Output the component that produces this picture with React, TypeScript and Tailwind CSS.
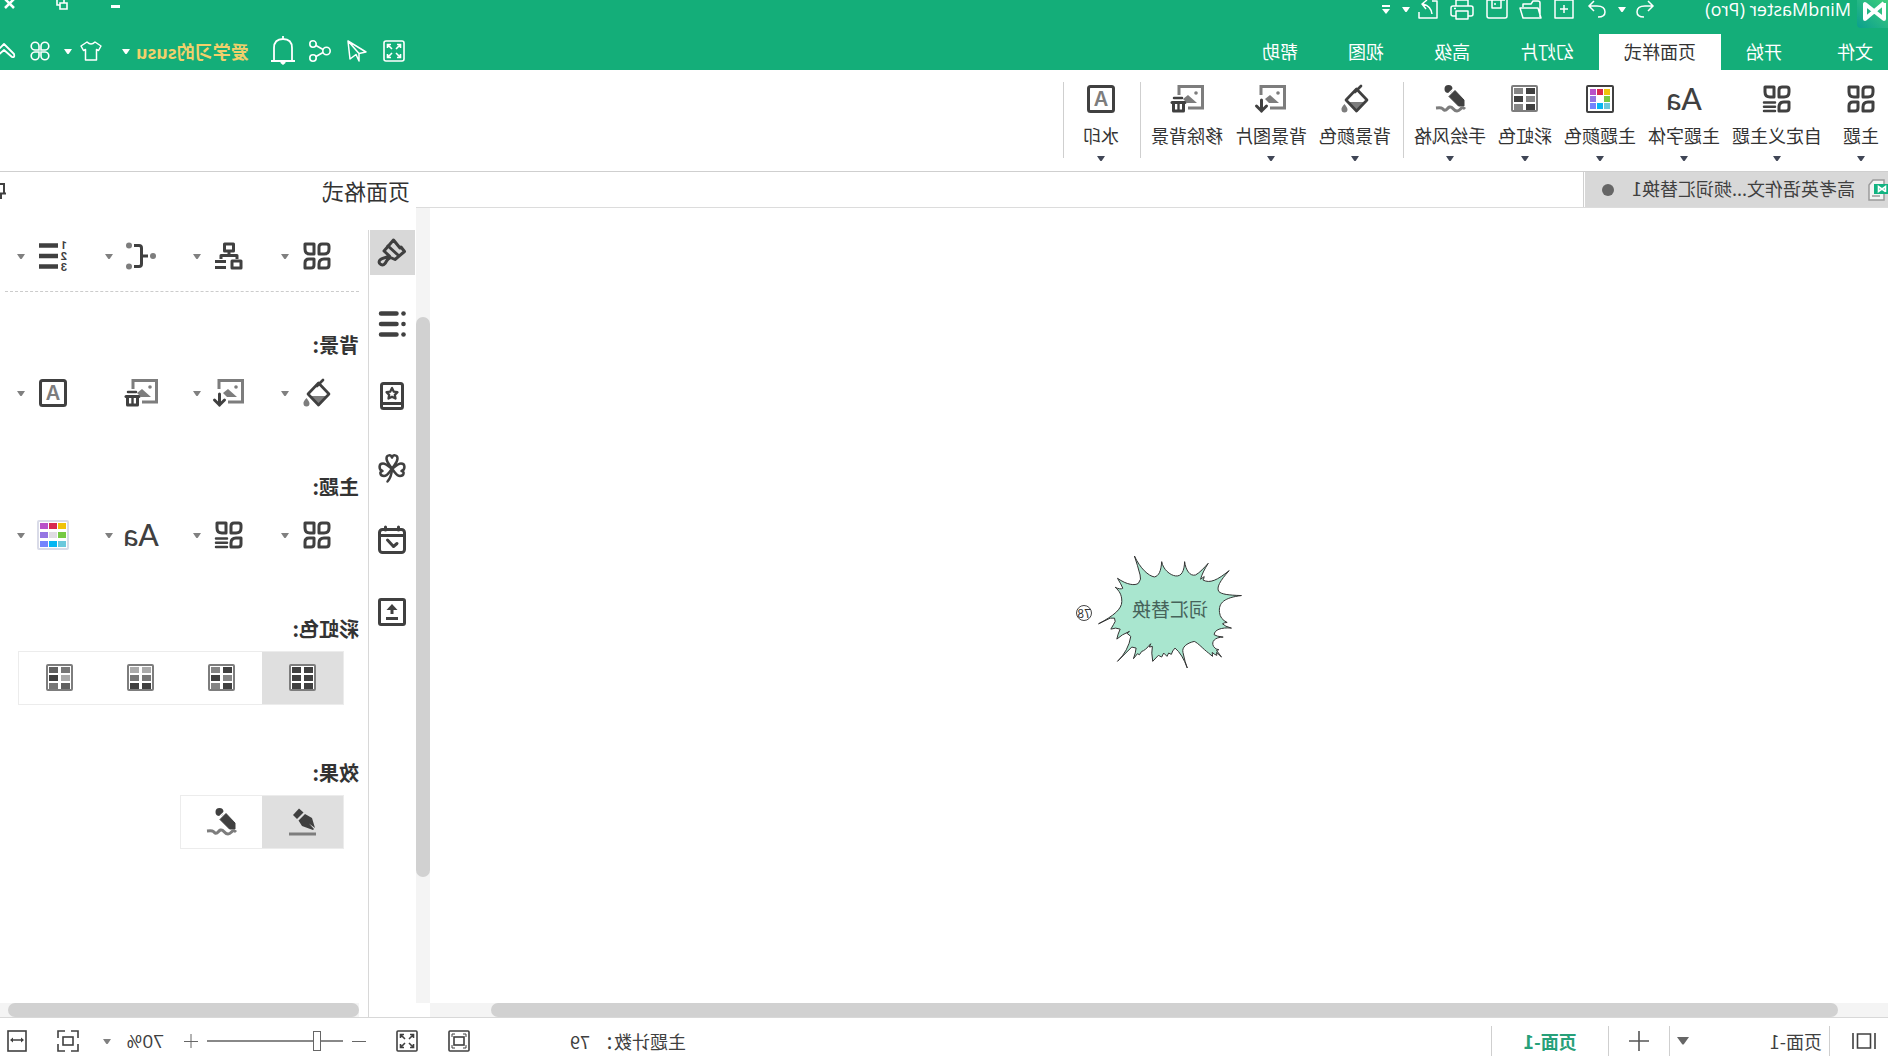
import { ReactNode } from "react";

const DARK = "#404040";
const GREY = "#7d7d7d";

interface IconProps {
  w?: number;
  h?: number;
  children: ReactNode;
}

function Icon({ w = 28, h = 28, children }: IconProps) {
  return (
    <svg width={w} height={h} viewBox={`0 0 ${w} ${h}`} fill="none" className="shrink-0 overflow-visible" aria-hidden="true">
      {children}
    </svg>
  );
}

function Caret({ className = "text-[#808080]" }: { className?: string }) {
  return (
    <svg width="8" height="5" viewBox="0 0 8 5" className={`shrink-0 ${className}`} aria-hidden="true">
      <path d="M0 0h8L5 4.4a1.3 1.3 0 0 1-2 0z" fill="currentColor" />
    </svg>
  );
}

/* ---------- ribbon and panel icons ---------- */

const PETAL_TL = "M2 4.500Q2 2 4.500 2H9Q12 2 12 5V12H7Q2 12 2 7z";
const PETAL_TR = "M17 2H26V7Q26 12 21 12H17z";
const PETAL_BL = "M2 17H7Q12 17 12 22V26H5Q2 26 2 23z";
const PETAL_BR = "M17 17H22Q26 17 26 21V26H20Q17 26 17 23z";

function ThemeIcon() {
  return (
    <Icon>
      <g stroke={DARK} strokeWidth="3" strokeLinejoin="round">
        <path d={PETAL_TL} />
        <path d={PETAL_TR} />
        <path d={PETAL_BL} />
        <path d={PETAL_BR} />
      </g>
    </Icon>
  );
}

function CustomThemeIcon() {
  return (
    <Icon>
      <g stroke={DARK} strokeWidth="3" strokeLinejoin="round">
        <path d={PETAL_TL} />
        <path d={PETAL_TR} />
        <path d={PETAL_BL} />
        <path d="M16 17.500H27M16 21.800H27M16 26H27" strokeWidth="2.500" strokeLinecap="round" />
      </g>
    </Icon>
  );
}

function FontIcon() {
  return <span className="pb-0.5 font-[Lato,sans-serif] text-[30px] font-medium leading-7 text-[#404040]">Aa</span>;
}

const SWATCHES = ["#f0c30b", "#d9294f", "#b950c8", "#76c943", "#ffffff", "#9575e3", "#6cc8dc", "#06b6f2", "#7484fd"];

function PaletteIcon({ soft = false }: { soft?: boolean }) {
  const size = soft ? 8 : 6;
  const step = soft ? 9 : 7;
  return (
    <Icon w={soft ? 32 : 28} h={soft ? 30 : 28}>
      <rect x="1" y="1" width={soft ? 30 : 26} height={soft ? 28 : 26} rx="1" stroke={soft ? "#d9dbe8" : DARK} strokeWidth="2" fill="#fff" />
      {SWATCHES.map((c, i) => (
        <rect
          key={i}
          x={(soft ? 3 : 4) + (i % 3) * step}
          y={(soft ? 3 : 4) + Math.floor(i / 3) * step}
          width={size}
          height={soft ? 6 : size}
          fill={soft && i === 4 ? "#e0dce2" : c}
        />
      ))}
    </Icon>
  );
}

function GridIcon({ cells }: { cells: string[] }) {
  return (
    <Icon w={27}>
      <rect x="1" y="1" width="25" height="25" rx="1" stroke={GREY} strokeWidth="2" fill="#fff" />
      {cells.map((c, i) => (
        <rect key={i} x={3 + (i % 2) * 12} y={3 + Math.floor(i / 2) * 8} width="9" height="6" fill={c} />
      ))}
    </Icon>
  );
}

const CHECKER = [DARK, "#858585", "#858585", DARK, DARK, "#858585"];

function HandDrawnIcon() {
  return (
    <Icon w={30}>
      <circle cx="16.500" cy="4" r="4" fill={DARK} />
      <path d="M10 5.500L16 11.500L6.500 21H1V15z" fill={DARK} stroke={DARK} strokeLinejoin="round" />
      <path d="M10.500 3L18.500 10.500" stroke="#fff" strokeWidth="1.500" />
      <path d="M0 24C4 20 4 26 8 26C12 26 12 21 15.500 22C18 23 18 26 21 25C23 23 23 22.500 29 23" stroke={GREY} strokeWidth="3" />
    </Icon>
  );
}

function PenIcon() {
  return (
    <Icon w={27}>
      <path d="M12.500 4.500L17 0.500L23 7L19 11z" fill={DARK} />
      <path d="M11 6L17.500 12.500L14 18L3 22L2 21L7 15.500L1 20L4 10z" fill={DARK} />
      <path d="M0 26H27" stroke={GREY} strokeWidth="3" />
    </Icon>
  );
}

function BucketIcon() {
  return (
    <Icon>
      <path d="M4 17H21L12.500 26z" fill={GREY} />
      <path d="M12.500 4L23 15L12.500 26L2 15z" stroke={DARK} strokeWidth="2.700" strokeLinejoin="round" />
      <path d="M8 1L14 7" stroke={DARK} strokeWidth="2.700" strokeLinecap="round" />
      <path d="M24.500 19Q28 22.500 27.500 24.500A3 3 0 0 1 21.500 24.500Q21.500 22.500 24.500 19z" fill={GREY} />
    </Icon>
  );
}

function PictureFrame() {
  return (
    <>
      <path d="M25 10V1.500H1.500V23H16" stroke={GREY} strokeWidth="3" />
      <circle cx="8" cy="8" r="1.800" fill={GREY} />
      <path d="M7 18L16 10L21 14L17 18z" fill={GREY} />
    </>
  );
}

function BackgroundImageIcon() {
  return (
    <Icon w={30}>
      <PictureFrame />
      <path d="M24.500 15V26M19.500 21L24.500 26L29.500 21" stroke={DARK} strokeWidth="3" strokeLinecap="round" />
    </Icon>
  );
}

function RemoveBackgroundIcon() {
  return (
    <Icon w={34}>
      <PictureFrame />
      <path d="M22 13H30" stroke={DARK} strokeWidth="2.500" strokeLinecap="round" />
      <path d="M19 17.500H32" stroke={DARK} strokeWidth="3" strokeLinecap="round" />
      <path d="M20.500 18V26H30.500V18" stroke={DARK} strokeWidth="3" strokeLinejoin="round" />
      <path d="M25.500 18V25" stroke={DARK} strokeWidth="2.400" />
    </Icon>
  );
}

function WatermarkIcon() {
  return (
    <Icon>
      <rect x="1.500" y="1.500" width="25" height="25" rx="2" stroke={DARK} strokeWidth="3" />
      <text x="14" y="21" textAnchor="middle" fill={GREY} className="font-[Inter,sans-serif] text-[20px] font-semibold">A</text>
    </Icon>
  );
}

function LayoutIcon() {
  return (
    <Icon>
      <g stroke={DARK} strokeWidth="3" strokeLinejoin="round">
        <rect x="9.500" y="2" width="9" height="7" />
        <path d="M14 9V13M6 17V13.500H22V17" />
        <rect x="2" y="19" width="9" height="7" />
        <path d="M17 19.500H28M17 25.500H28" />
      </g>
    </Icon>
  );
}

function ConnectorIcon() {
  return (
    <Icon w={30}>
      <circle cx="3" cy="14" r="3" fill={GREY} />
      <circle cx="27" cy="3.500" r="3" fill={GREY} />
      <circle cx="27" cy="24.500" r="3" fill={GREY} />
      <path d="M8 14H14.500M22 3.500H17Q14.500 3.500 14.500 6V22Q14.500 24.500 17 24.500H22" stroke={DARK} strokeWidth="3" />
    </Icon>
  );
}

function NumberingIcon() {
  return (
    <Icon>
      <g fill={DARK} className="font-[Roboto,sans-serif] text-[11px] font-bold">
        <text x="0" y="7">1</text>
        <text x="0" y="18">2</text>
        <text x="0" y="29">3</text>
      </g>
      <path d="M9 3.500H28M9 14H28M9 24.500H28" stroke={DARK} strokeWidth="4.500" />
    </Icon>
  );
}

/* ---------- side strip icons ---------- */

function BrushIcon() {
  return (
    <Icon>
      <g stroke={DARK} strokeWidth="3" strokeLinejoin="round" strokeLinecap="round">
        <path d="M1.500 13.500L5 9L6 10L12.500 2L22 13L16.500 18C19 20 24 19 26.500 22.500C28 26 23.500 28.500 21 25.500C19 23 19.500 21 15.500 19.500L11 21.500z" />
        <path d="M8 17L18 8" />
      </g>
    </Icon>
  );
}

function OutlineIcon() {
  return (
    <Icon>
      <path d="M9.500 3.500H25M9.500 14H25M9.500 24.500H25" stroke={DARK} strokeWidth="4.500" strokeLinecap="round" />
      <circle cx="2.500" cy="3.500" r="2.300" fill={DARK} />
      <circle cx="2.500" cy="14" r="2.300" fill={DARK} />
      <circle cx="2.500" cy="24.500" r="2.300" fill={DARK} />
    </Icon>
  );
}

function StarBookIcon() {
  return (
    <Icon w={24}>
      <g stroke={DARK} strokeWidth="3" strokeLinejoin="round">
        <rect x="1.500" y="1.500" width="21" height="25" rx="2" />
        <path d="M1.500 21.500H22.500" />
        <path d="M12 6L13.800 9.700L17.500 10.200L14.800 12.800L15.500 16.500L12 14.700L8.500 16.500L9.200 12.800L6.500 10.200L10.200 9.700z" strokeWidth="2.300" />
      </g>
    </Icon>
  );
}

function CloverIcon() {
  return (
    <Icon>
      <g stroke={DARK} strokeWidth="2.500" strokeLinecap="round" strokeLinejoin="round">
        <path d="M14 15C11 10 8.500 8 8.500 4.500C8.500 0.500 13 0.500 14 3.500C15 0.500 19.500 0.500 19.500 4.500C19.500 8 17 10 14 15z" />
        <path d="M14 15C11 18 9.500 22 6 22C2 22 1 17.500 4.500 17C0.500 15.500 0.500 9.500 5 9.500C8.500 9.500 11 13 14 15z" />
        <path d="M14 15C17 18 18.500 22 22 22C26 22 27 17.500 23.500 17C27.500 15.500 27.500 9.500 23 9.500C19.500 9.500 17 13 14 15z" />
        <path d="M14 15Q14.500 23 18.500 27.500" />
      </g>
    </Icon>
  );
}

function CalendarIcon() {
  return (
    <Icon>
      <g stroke={DARK} strokeWidth="3" strokeLinejoin="round" strokeLinecap="round">
        <rect x="1.500" y="3.500" width="25" height="23" rx="3" />
        <path d="M1.500 9.500H26.500M7.500 1V4M20.500 1V4" />
        <path d="M18.500 14L12.500 20.500L9 17.500" />
      </g>
    </Icon>
  );
}

function ExportBoxIcon() {
  return (
    <Icon>
      <g stroke={DARK} strokeWidth="3">
        <rect x="1.500" y="1.500" width="25" height="25" rx="1.500" />
        <path d="M14 16V9M8 20.500H20" />
      </g>
      <path d="M14 6L19.500 12H8.500z" fill={DARK} />
    </Icon>
  );
}

/* ---------- header ---------- */

function Logo() {
  return (
    <svg width="31" height="28" viewBox="0 0 31 28" className="shrink-0" aria-hidden="true">
      <defs>
        <linearGradient id="logo" x1="0" y1="0" x2="1" y2="1">
          <stop offset="0" stopColor="#3fce7c" />
          <stop offset="1" stopColor="#0b9f8e" />
        </linearGradient>
      </defs>
      <path d="M0 0H31V24Q31 28 27 28H0z" fill="url(#logo)" />
      <path d="M4 3V19L23 4V19L4 3" stroke="#fff" strokeWidth="4" strokeLinejoin="round" fill="none" />
    </svg>
  );
}

const QUICK_ACTIONS = [
  { label: "新建", w: 20, d: "M1 0H19V18H1zM10 5V13M6 9H14" },
  { label: "打开", w: 22, d: "M2 17V3Q2 1 4 1H9L11 4H19V7M1 18L4 8H22L19 18z" },
  { label: "保存", w: 22, d: "M3 0H21V16Q21 18 19 18H3Q1 18 1 16V0M7 0V8H16V0M13 3V5" },
  { label: "打印", w: 24, d: "M6 6V0H18V6M6 16H3Q1 16 1 14V8Q1 6 3 6H21Q23 6 23 8V14Q23 16 21 16H18M6 11H18V19H6zM18 8.500H20" },
  { label: "导出", w: 20, d: "M6 1H1V18H19V12M6 14Q7 6 15 4M11 0L16 4L12 9" },
];

function TitleBar() {
  return (
    <div className="flex h-[34px] items-center pb-4 text-white">
      <div className="self-start">
        <Logo />
      </div>
      <h1 className="ml-1.5 w-[197px] whitespace-nowrap font-['Open_Sans',sans-serif] text-[18px] leading-4">MindMaster (Pro)</h1>
      <div className="flex items-center gap-2.5">
        <button type="button" aria-label="撤销" className="w-[18px]">
          <Icon w={18} h={18}><path d="M6 1L1 6L6 11M1 6H9Q17 6 17 12Q17 17 10 17" stroke="#fff" strokeWidth="1.500" /></Icon>
        </button>
        <Caret className="text-white" />
        <button type="button" aria-label="重做" className="w-5 pl-0.5">
          <Icon w={18} h={18}><path d="M12 1L17 6L12 11M17 6H9Q1 6 1 12Q1 17 8 17" stroke="#fff" strokeWidth="1.500" /></Icon>
        </button>
        <div className="ml-1 flex items-center gap-3">
          {QUICK_ACTIONS.map((a) => (
            <button key={a.label} type="button" aria-label={a.label}>
              <Icon w={a.w} h={18}><path d={a.d} stroke="#fff" strokeWidth="1.500" strokeLinejoin="round" /></Icon>
            </button>
          ))}
        </div>
        <div className="-ml-0.5 flex items-center gap-3">
          <Caret className="text-white" />
          <button type="button" aria-label="更多" className="w-2">
            <Icon w={8} h={9}><path d="M0 1H8" stroke="#fff" strokeWidth="2" /><path d="M0 4H8L4 9z" fill="#fff" /></Icon>
          </button>
        </div>
      </div>
      <div className="ml-auto flex items-start gap-[42px] self-start pr-1">
        <button type="button" aria-label="最小化"><Icon w={10} h={10}><path d="M0 6.500H9" stroke="#fff" strokeWidth="3" /></Icon></button>
        <button type="button" aria-label="还原"><Icon w={12} h={10}><path d="M1 3H8V9H1zM4 3V-1H11V5H8" stroke="#fff" strokeWidth="1.600" /></Icon></button>
        <button type="button" aria-label="关闭"><Icon w={10} h={10}><path d="M0 -1L9 8M9 -1L0 8" stroke="#fff" strokeWidth="2.500" /></Icon></button>
      </div>
    </div>
  );
}

const TABS = ["开始", "页面样式", "幻灯片", "高级", "视图", "帮助"];

function TabRow() {
  return (
    <div className="flex h-9 items-center text-[18px] text-white">
      <button type="button" className="h-full pb-0.5 pl-[15px] pr-[30px]">文件</button>
      <nav className="flex h-full">
        {TABS.map((tab) => (
          <button
            key={tab}
            type="button"
            className={`h-full px-[25px] pb-0.5 ${tab === "页面样式" ? "bg-white text-[#333]" : ""}`}
          >
            {tab}
          </button>
        ))}
      </nav>
      <div className="ml-auto flex items-center pb-0.5">
        <button type="button" aria-label="全屏" className="mr-4">
          <Icon w={22} h={22}>
            <g stroke="#fff" strokeWidth="1.600">
              <rect x="1" y="1" width="20" height="20" rx="2" />
              <path d="M4.500 8V4.500H8M4.500 4.500L9 9M14 4.500H17.500V8M17.500 4.500L13 9M4.500 14V17.500H8M4.500 17.500L9 13M14 17.500H17.500V14M17.500 17.500L13 13" />
            </g>
          </Icon>
        </button>
        <button type="button" aria-label="发送" className="mr-4">
          <Icon w={20} h={22}><path d="M19 1L17 19L11 14.500L8 21V13.500L1 12zM19 1L8 13.500" stroke="#fff" strokeWidth="1.500" strokeLinejoin="round" /></Icon>
        </button>
        <button type="button" aria-label="分享" className="mr-3.5">
          <Icon w={22} h={22}>
            <g stroke="#fff" strokeWidth="1.600">
              <circle cx="4.500" cy="11" r="3.700" />
              <circle cx="18" cy="4" r="3.200" />
              <circle cx="18" cy="18" r="3.200" />
              <path d="M8 9.500L15 5.500M8 12.500L15 16.500" />
            </g>
          </Icon>
        </button>
        <button type="button" aria-label="通知" className="mr-[22px]">
          <Icon w={24} h={30}>
            <path d="M3 25V12Q3 3 12 3Q21 3 21 12V25M0 25H24M12 0V3" stroke="#fff" strokeWidth="1.800" />
            <path d="M9.500 25H14.500V27L12 29L9.500 27z" fill="#fff" />
          </Icon>
        </button>
        <button type="button" className="flex items-center gap-1.5 whitespace-nowrap font-bold text-[#f2d06b]">
          爱学习的susu
          <Caret className="text-white" />
        </button>
        <button type="button" aria-label="皮肤" className="ml-5 flex items-center gap-2">
          <Icon w={22} h={20}><path d="M7 1Q11 5 15 1L21 5L18.500 9.500L16.500 8.500V19H5.500V8.500L3.500 9.500L1 5z" stroke="#fff" strokeWidth="1.500" strokeLinejoin="round" /></Icon>
          <Caret className="text-white" />
        </button>
        <button type="button" aria-label="应用" className="ml-3.5">
          <Icon w={20} h={20}>
            <g stroke="#fff" strokeWidth="1.600">
              <path d="M9 9H4.800A3.900 3.900 0 1 1 9 5zM11 9H15.200A3.900 3.900 0 1 0 11 5zM9 11H4.800A3.900 3.900 0 1 0 9 15zM11 11H15.200A3.900 3.900 0 1 1 11 15z" />
            </g>
          </Icon>
        </button>
        <button type="button" aria-label="收起" className="ml-3.5 w-4">
          <Icon w={24} h={18}><path d="M2 12L12 2L22 12Q23 16 20 15L12 8L4 15Q1 16 2 12z" stroke="#fff" strokeWidth="1.800" strokeLinejoin="round" /></Icon>
        </button>
      </div>
    </div>
  );
}

/* ---------- ribbon ---------- */

interface Tool {
  label: string;
  icon: ReactNode;
  menu?: boolean;
}

const RIBBON: Tool[][] = [
  [
    { label: "主题", icon: <ThemeIcon />, menu: true },
    { label: "自定义主题", icon: <CustomThemeIcon />, menu: true },
    { label: "主题字体", icon: <FontIcon />, menu: true },
    { label: "主题颜色", icon: <PaletteIcon />, menu: true },
    { label: "彩虹色", icon: <GridIcon cells={CHECKER} />, menu: true },
    { label: "手绘风格", icon: <HandDrawnIcon />, menu: true },
  ],
  [
    { label: "背景颜色", icon: <BucketIcon />, menu: true },
    { label: "背景图片", icon: <BackgroundImageIcon />, menu: true },
    { label: "移除背景", icon: <RemoveBackgroundIcon /> },
  ],
  [{ label: "水印", icon: <WatermarkIcon />, menu: true }],
];

function Ribbon() {
  return (
    <div className="flex border-b border-[#cfcfcf] bg-white pb-[13px] pt-3">
      {RIBBON.map((group, i) => (
        <div key={i} className={`flex h-[76px] gap-3 border-r border-[#cfcfcf] pr-2.5 ${i > 0 ? "pl-3" : ""}`}>
          {group.map((tool) => (
            <button key={tool.label} type="button" className="flex min-w-[54px] flex-col items-center pt-[3px] text-[18px] text-[#333]">
              <span className="flex h-7 items-center">{tool.icon}</span>
              <span className="mt-2.5 whitespace-nowrap leading-6">{tool.label}</span>
              {tool.menu && <Caret className="mt-[9px] text-[#404656]" />}
            </button>
          ))}
        </div>
      ))}
    </div>
  );
}

/* ---------- canvas ---------- */

function DocumentTab() {
  return (
    <div className="flex h-9 shrink-0 border-b border-[#dcdcdc]">
      <div className="flex w-[303px] items-center bg-[#d8d8d8] text-[18px] text-[#404040]">
        <Icon w={20} h={22}>
          <path d="M4 1H15L19 6V21H4z" fill="#f4f4f4" stroke="#9a9a9a" strokeWidth="1.500" />
          <path d="M8 17H16" stroke="#9a9a9a" strokeWidth="1.500" />
          <rect x="0" y="5" width="14" height="10" fill="#12b381" />
          <path d="M2.500 13V7.500L9.500 12.500V7.500L2.500 12.500" stroke="#fff" strokeWidth="1.600" />
        </Icon>
        <span className="ml-[13px] whitespace-nowrap pb-0.5">高考英语作文...频词汇替换1</span>
        <span className="ml-auto mr-[17px] size-3 rounded-full bg-[#666]" />
      </div>
      <div className="ml-px border-l border-[#d0d0d0]" />
    </div>
  );
}

function TopicNode() {
  return (
    <div className="absolute left-[646px] top-[348px] flex h-28 w-36 items-center justify-center">
      <svg viewBox="0 0 430 337" className="absolute inset-0 size-full overflow-visible" aria-hidden="true">
        <path
          d="M322 0C305 37 280 60 262 63C248 60 242 45 240 17C236 40 215 58 198 60C180 62 172 45 171 17C168 42 155 62 138 57C125 50 112 35 100 22Q118 50 123 70L112 62Q114 72 116 72C95 84 72 72 37 44C65 75 76 95 68 107C60 115 40 118 0 119C50 125 70 140 66 170Q64 190 43 200Q52 200 57 204Q50 212 30 217C60 214 82 222 82 237Q75 242 55 244C80 244 92 258 84 272Q78 282 68 282L75 284L60 304L75 290L74 299Q82 296 88 290L87 302L99 292C115 280 130 262 142 257C165 262 180 275 176 290Q170 320 163 337Q178 295 200 277Q208 285 211 296L219 292L224 302L234 292L240 304L250 299L267 317Q272 290 268 272L277 274L273 264Q290 285 300 287L307 297L313 294L325 309Q318 290 317 277L330 274L373 317Q340 285 333 242L345 232L337 227Q360 236 375 250Q372 235 365 220Q378 214 393 220Q384 205 380 197L382 187L395 187L430 204C385 180 360 160 360 137C360 115 368 105 380 94Q365 102 357 97Q362 85 373 67C345 87 320 90 310 82Q300 70 305 57Q312 30 322 0z"
          fill="#a9e6cf"
          stroke="#333"
          strokeWidth="3"
          strokeLinejoin="round"
        />
      </svg>
      <span className="relative whitespace-nowrap pb-1.5 text-[19px] text-[#46635a]">词汇替换</span>
      <span className="absolute -right-[22px] top-[49px] flex size-4 items-center justify-center rounded-full border border-[#444] text-[12px] leading-3 text-[#333]">
        78
      </span>
    </div>
  );
}

function Canvas() {
  return (
    <section className="flex min-w-0 flex-1 flex-col">
      <DocumentTab />
      <div className="flex min-h-0 flex-1">
        <div className="relative flex-1 bg-white">
          <TopicNode />
        </div>
        <div className="w-3.5 bg-[#f4f4f4] pb-[126px] pt-[109px]">
          <div className="h-full rounded-full bg-[#d1d1d1]" />
        </div>
      </div>
      <div className="mr-3.5 h-3.5 shrink-0 bg-[#f4f4f4] pl-[50px] pr-[61px]">
        <div className="h-full rounded-full bg-[#d1d1d1]" />
      </div>
    </section>
  );
}

/* ---------- format panel ---------- */

const STRIP = [
  { label: "页面格式", icon: <BrushIcon /> },
  { label: "大纲", icon: <OutlineIcon /> },
  { label: "图标", icon: <StarBookIcon /> },
  { label: "剪贴画", icon: <CloverIcon /> },
  { label: "任务", icon: <CalendarIcon /> },
  { label: "导出", icon: <ExportBoxIcon /> },
];

function IconRow({ tools }: { tools: Tool[] }) {
  return (
    <div className="flex h-8">
      {tools.map((tool) => (
        <button key={tool.label} type="button" aria-label={tool.label} className="flex w-[88px] items-center gap-3 pl-[26px]">
          <span className="flex w-8 justify-center">{tool.icon}</span>
          {tool.menu && <Caret />}
        </button>
      ))}
    </div>
  );
}

function Toggle({ options }: { options: Tool[] }) {
  return (
    <div className="ml-[15px] flex h-[54px] w-fit border border-[#ececec]">
      {options.map((o, i) => (
        <button
          key={o.label}
          type="button"
          aria-label={o.label}
          aria-pressed={i === 0}
          className={`flex w-[81px] items-center justify-center ${i === 0 ? "bg-[#dfdfdf]" : ""}`}
        >
          {o.icon}
        </button>
      ))}
    </div>
  );
}

function SectionTitle({ children }: { children: ReactNode }) {
  return <h3 className="text-[20px] font-bold leading-7 text-[#333]">{children}</h3>;
}

function FormatPanel() {
  return (
    <aside className="flex w-[416px] shrink-0 flex-col">
      <div className="flex h-10 items-center justify-between overflow-hidden pb-1 pl-1.5 text-[22px] text-[#333]">
        <h2>页面格式</h2>
        <button type="button" aria-label="固定" className="w-1.5">
          <Icon w={12} h={18}><path d="M0 12.500H12M2 12.500V3H12M5 12.500V18" stroke={DARK} strokeWidth="2" /></Icon>
        </button>
      </div>
      <div className="flex min-h-0 flex-1">
        <div className="flex w-[47px] flex-col items-center gap-[27px] pt-[18px]">
          {STRIP.map((s, i) => (
            <button
              key={s.label}
              type="button"
              aria-label={s.label}
              className={`flex size-[45px] items-center justify-center pb-px ${i === 0 ? "bg-[#d8d8d8]" : ""}`}
            >
              {s.icon}
            </button>
          ))}
        </div>
        <div className="mt-[18px] flex flex-1 flex-col border-l border-[#d8d8d8]">
          <div className="min-h-0 flex-1 overflow-hidden pl-[9px] pt-[10px]">
            <IconRow
              tools={[
                { label: "主题", icon: <ThemeIcon />, menu: true },
                { label: "布局", icon: <LayoutIcon />, menu: true },
                { label: "连接线样式", icon: <ConnectorIcon />, menu: true },
                { label: "编号", icon: <NumberingIcon />, menu: true },
              ]}
            />
            <div className="mr-[5px] mt-[19px] border-t border-dashed border-[#cccccc]" />
            <div className="mt-[39px] flex flex-col gap-16">
              <section className="flex flex-col gap-[18px]">
                <SectionTitle>背景:</SectionTitle>
                <IconRow
                  tools={[
                    { label: "背景颜色", icon: <BucketIcon />, menu: true },
                    { label: "背景图片", icon: <BackgroundImageIcon />, menu: true },
                    { label: "移除背景", icon: <RemoveBackgroundIcon /> },
                    { label: "水印", icon: <WatermarkIcon />, menu: true },
                  ]}
                />
              </section>
              <section className="flex flex-col gap-[18px]">
                <SectionTitle>主题:</SectionTitle>
                <IconRow
                  tools={[
                    { label: "主题", icon: <ThemeIcon />, menu: true },
                    { label: "自定义主题", icon: <CustomThemeIcon />, menu: true },
                    { label: "主题字体", icon: <FontIcon />, menu: true },
                    { label: "主题颜色", icon: <PaletteIcon soft />, menu: true },
                  ]}
                />
              </section>
              <section className="flex flex-col gap-2">
                <SectionTitle>彩虹色:</SectionTitle>
                <Toggle
                  options={[
                    { label: "单色", icon: <GridIcon cells={[DARK, DARK, DARK, DARK, DARK, DARK]} /> },
                    { label: "彩虹一", icon: <GridIcon cells={CHECKER} /> },
                    { label: "彩虹二", icon: <GridIcon cells={["#ababab", "#ababab", "#777777", "#777777", DARK, DARK]} /> },
                    { label: "彩虹三", icon: <GridIcon cells={["#777777", "#606060", "#ababab", DARK, "#606060", "#777777"]} /> },
                  ]}
                />
              </section>
              <section className="-mt-2.5 flex flex-col gap-2">
                <SectionTitle>效果:</SectionTitle>
                <Toggle
                  options={[
                    { label: "普通", icon: <PenIcon /> },
                    { label: "手绘风格", icon: <HandDrawnIcon /> },
                  ]}
                />
              </section>
            </div>
          </div>
          <div className="h-3.5 bg-[#f4f4f4] pr-2">
            <div className="h-full border-l-[9px] border-white">
              <div className="h-full rounded-full bg-[#d1d1d1]" />
            </div>
          </div>
        </div>
      </div>
    </aside>
  );
}

/* ---------- status bar ---------- */

function StatusBar() {
  return (
    <footer className="flex h-[39px] shrink-0 items-center border-t border-[#d8d8d8] bg-white pt-2 text-[18px] text-[#404040]">
      <button type="button" aria-label="页面视图" className="flex h-full w-[58px] items-center pl-3">
        <Icon w={24} h={16}><path d="M1 0V16M23 0V16M5.500 1H18.500V15H5.500z" stroke={DARK} strokeWidth="1.600" /></Icon>
      </button>
      <button type="button" className="flex h-full w-40 items-center justify-between border-l border-[#cfcfcf] px-[7px]">
        页面-1
        <svg width="12" height="8" viewBox="0 0 12 8" aria-hidden="true"><path d="M0 0H12L7 7Q6 8 5 7z" fill="#666" /></svg>
      </button>
      <button type="button" aria-label="新建页面" className="flex h-full w-[61px] items-center justify-center border-l border-[#cfcfcf]">
        <Icon w={20} h={20}><path d="M10 0V20M0 10H20" stroke="#555" strokeWidth="1.600" /></Icon>
      </button>
      <button type="button" className="flex h-full w-[118px] items-center justify-center border-x border-[#cfcfcf] font-bold text-[#27a079]">
        页面-1
      </button>
      <div className="ml-auto flex items-center pr-[7px]">
        <span className="w-24">主题计数：</span>
        <span className="w-[120px]">79</span>
        <button type="button" aria-label="适应窗口" className="mr-[30px]">
          <Icon w={22} h={22}>
            <g stroke={DARK} strokeWidth="1.600">
              <rect x="1" y="1" width="20" height="20" rx="1" />
              <rect x="6" y="7" width="10" height="8" />
              <path d="M4 7V4H7M15 4H18V7M18 15V18H15M7 18H4V15" strokeWidth="1" />
            </g>
          </Icon>
        </button>
        <button type="button" aria-label="全屏" className="mr-[30px]">
          <Icon w={22} h={22}>
            <g stroke={DARK} strokeWidth="1.600">
              <rect x="1" y="1" width="20" height="20" rx="1" />
              <path d="M4.500 8V4.500H8M4.500 4.500L9 9M14 4.500H17.500V8M17.500 4.500L13 9M4.500 14V17.500H8M4.500 17.500L9 13M14 17.500H17.500V14M17.500 17.500L13 13" />
            </g>
          </Icon>
        </button>
        <button type="button" aria-label="缩小"><Icon w={14} h={14}><path d="M0 7.500H14" stroke="#666" /></Icon></button>
        <input
          type="range"
          aria-label="缩放"
          min={0}
          max={100}
          defaultValue={17}
          className="mx-[9px] h-5 w-[136px] appearance-none bg-transparent [&::-webkit-slider-runnable-track]:h-0.5 [&::-webkit-slider-runnable-track]:bg-[#888] [&::-webkit-slider-thumb]:-mt-[9px] [&::-webkit-slider-thumb]:h-5 [&::-webkit-slider-thumb]:w-2 [&::-webkit-slider-thumb]:appearance-none [&::-webkit-slider-thumb]:border [&::-webkit-slider-thumb]:border-[#666] [&::-webkit-slider-thumb]:bg-white"
        />
        <button type="button" aria-label="放大"><Icon w={14} h={14}><path d="M0 7.500H14M7 0V14" stroke="#666" /></Icon></button>
        <button type="button" className="ml-5 flex w-[61px] items-center justify-between font-['Open_Sans',sans-serif] text-[19px] leading-6">
          70%
          <Caret />
        </button>
        <button type="button" aria-label="适合页面" className="ml-6">
          <Icon w={22} h={22}>
            <path d="M1 8V1H8M14 1H21V8M21 14V21H14M8 21H1V14" stroke={DARK} strokeWidth="1.600" />
            <rect x="6" y="7" width="10" height="8" stroke={DARK} strokeWidth="1.600" />
          </Icon>
        </button>
        <button type="button" aria-label="适合宽度" className="ml-[30px]">
          <Icon w={20} h={22}>
            <rect x="1" y="1" width="18" height="20" stroke={DARK} strokeWidth="1.600" />
            <path d="M4 10H16" stroke={DARK} strokeWidth="1.500" />
            <path d="M3 10L6 7.500V12.500zM17 10L14 7.500V12.500z" fill={DARK} />
          </Icon>
        </button>
      </div>
    </footer>
  );
}

export default function App() {
  return (
    <div className="flex h-screen -scale-x-100 flex-col overflow-hidden bg-white font-['Noto_Sans_CJK_SC',sans-serif]">
      <header>
        <div className="bg-[#14ae79]">
          <TitleBar />
          <TabRow />
        </div>
        <Ribbon />
      </header>
      <main className="flex min-h-0 flex-1">
        <Canvas />
        <FormatPanel />
      </main>
      <StatusBar />
    </div>
  );
}
